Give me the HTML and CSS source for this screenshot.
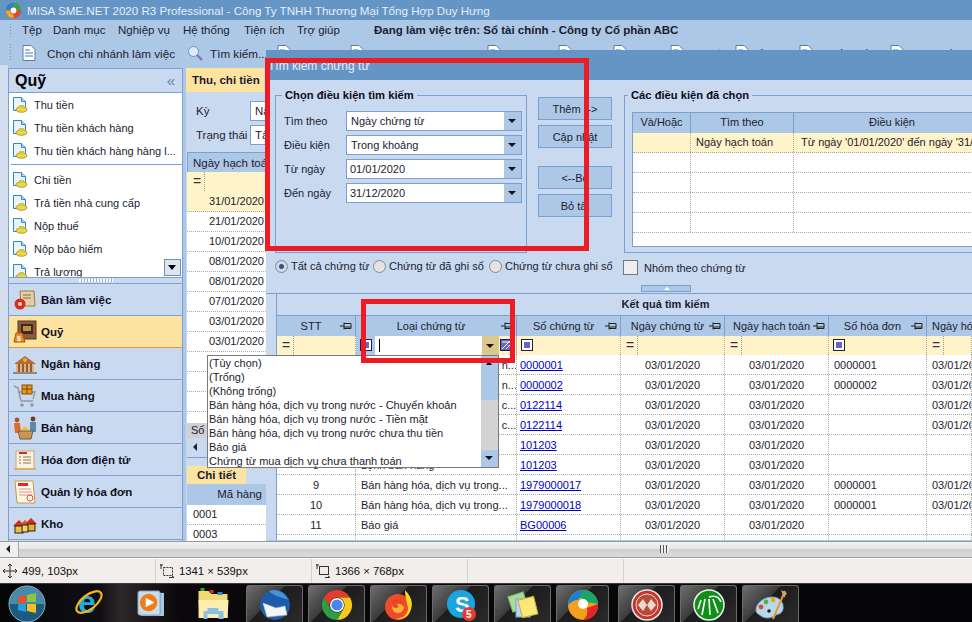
FILE: index.html
```html
<!DOCTYPE html>
<html lang="vi">
<head>
<meta charset="utf-8">
<title>MISA SME.NET 2020</title>
<link rel="stylesheet" href="styles.css">
</head>
<body>
<svg class="defs" width="0" height="0">
  <defs>
    <symbol id="doc" viewBox="0 0 16 16"><path d="M1.500 .5h8l4 4v9h-12z" fill="#eaf3fc" stroke="#2f86d0"/><path d="M9.500 .5v4h4" fill="#bcd9f2" stroke="#2f86d0"/><ellipse cx="9.500" cy="12.500" rx="5.500" ry="2.800" fill="#e8d84a" stroke="#8c7a10" stroke-width=".7"/><rect x="7" y="8" width="5" height="2.500" fill="#d8c53a"/></symbol>
    <symbol id="pin" viewBox="0 0 12 10"><path d="M0 5h4M4 1.500v7M4 2.500h7v5H4M4 6h7" fill="none" stroke="#222" stroke-width="1"/></symbol>
    <symbol id="fsq" viewBox="0 0 12 12"><rect x=".5" y=".5" width="11" height="11" fill="#fff" stroke="#223"/><rect x="3" y="3" width="6" height="6" fill="#6464cc"/></symbol>
    <symbol id="page" viewBox="0 0 14 16"><path d="M1 .5h8l4 4v11H1z" fill="#fff" stroke="#5a7ea8"/><path d="M3 5h5M3 8h8M3 11h8" stroke="#3a78c0"/></symbol>
  </defs>
</svg>

<div class="menubar-wrap">
  <header class="titlebar">
    <svg class="app-logo" viewBox="0 0 20 20"><circle cx="10" cy="10" r="9" fill="#e8442e"/><path d="M10 1a9 9 0 0 1 9 9h-5a4 4 0 0 0-4-4z" fill="#2fa84f"/><path d="M1 10a9 9 0 0 1 9-9v5a4 4 0 0 0-4 4z" fill="#1e88d8"/><path d="M1 10a9 9 0 0 0 9 9v-4a5 5 0 0 1-4-5z" fill="#f4a81c"/><circle cx="10" cy="10" r="3.400" fill="#fff"/></svg>
    <span class="title-text">MISA SME.NET 2020 R3 Professional - Công Ty TNHH Thương Mại Tổng Hợp Duy Hưng</span>
  </header>
  <nav class="menubar">
    <i class="grip"></i>
    <span class="m1">Tệp</span><span class="m2">Danh mục</span><span class="m3">Nghiệp vụ</span><span class="m4">Hệ thống</span><span class="m5">Tiện ích</span><span class="m6">Trợ giúp</span>
    <b class="working">Đang làm việc trên: Sổ tài chính - Công ty Cổ phần ABC</b>
  </nav>
  <div class="toolbar">
    <i class="grip"></i>
    <svg class="tb-ico t1"><use href="#page"/></svg><span class="t-chon">Chọn chi nhánh làm việc</span>
    <svg class="tb-ico t2" viewBox="0 0 16 16"><circle cx="6.500" cy="6.500" r="5" fill="#dcecfa" stroke="#6d93bd"/><path d="M10 10l5 5" stroke="#8a6fc0" stroke-width="2.400"/></svg><span class="t-tim">Tìm kiếm...</span>
    <svg class="tb-ico t3"><use href="#page"/></svg><span class="t-bc">Báo cáo</span>
    <svg class="tb-ico t4"><use href="#page"/></svg><span class="t-nk">Nhật ký chứng từ</span>
    <svg class="tb-ico t5"><use href="#page"/></svg><span class="t-them">Thêm</span>
    <svg class="tb-ico t6"><use href="#page"/></svg><span class="t-xem">Xem</span>
    <svg class="tb-ico t7"><use href="#page"/></svg><span class="t-xoa">Xóa</span>
    <svg class="tb-ico t8"><use href="#page"/></svg><span class="t-ghi dim">Ghi sổ</span>
    <svg class="tb-ico t9"><use href="#page"/></svg><span class="t-bo">Bỏ ghi</span>
    <svg class="tb-ico t10"><use href="#page"/></svg><span class="t-xk">Xuất khẩu</span>
    <svg class="tb-ico t11"><use href="#page"/></svg><span class="t-ph">Phản hồi</span>
  </div>
</div>

<main class="work">
  <aside class="sidebar">
    <div class="side-head"><strong>Quỹ</strong><span class="collapse">«</span></div>
    <div class="side-list">
      <div class="side-item"><svg class="doc"><use href="#doc"/></svg>Thu tiền</div>
      <div class="side-item"><svg class="doc"><use href="#doc"/></svg>Thu tiền khách hàng</div>
      <div class="side-item"><svg class="doc"><use href="#doc"/></svg>Thu tiền khách hàng hàng l...</div>
      <div class="side-sep"></div>
      <div class="side-item"><svg class="doc"><use href="#doc"/></svg>Chi tiền</div>
      <div class="side-item"><svg class="doc"><use href="#doc"/></svg>Trả tiền nhà cung cấp</div>
      <div class="side-item"><svg class="doc"><use href="#doc"/></svg>Nộp thuế</div>
      <div class="side-item"><svg class="doc"><use href="#doc"/></svg>Nộp bảo hiểm</div>
      <div class="side-item"><svg class="doc"><use href="#doc"/></svg>Trả lương</div>
      <span class="side-scroll"></span>
    </div>
    <div class="side-split"></div>
    <div class="nav-item">
      <svg class="nav-ico" viewBox="0 0 24 24"><path d="M7 3h14l1 15H8z" fill="#e2cfa6" stroke="#9a7a48"/><path d="M10 7h8M10 10h8" stroke="#8a6a3a"/><circle cx="7" cy="16" r="5.500" fill="#e0281e"/><circle cx="7" cy="16" r="2" fill="#fff2c0"/></svg>
      Bàn làm việc</div>
    <div class="nav-item active">
      <svg class="nav-ico" viewBox="0 0 24 24"><rect x="5" y="1" width="18" height="18" fill="#8e5a3a" stroke="#5c3820"/><rect x="8" y="4" width="12" height="10" fill="#3a2a20"/><path d="M10 6h8v5h-8z" fill="#c09040"/><path d="M1 22l2-9h6l3 9z" fill="#f08a1e" stroke="#a85808"/><text class="dollar" x="4" y="21">$</text></svg>
      Quỹ</div>
    <div class="nav-item">
      <svg class="nav-ico" viewBox="0 0 24 24"><path d="M1 12L12 4l11 8z" fill="#b86a3c"/><rect x="3" y="12" width="18" height="8" fill="#e0b080"/><path d="M6 12v8M10 12v8M14 12v8M18 12v8" stroke="#7a4a28" stroke-width="1.600"/><path d="M0 21h24" stroke="#8a8a8a" stroke-width="2"/><circle cx="12" cy="8" r="2" fill="#e8b81c"/></svg>
      Ngân hàng</div>
    <div class="nav-item">
      <svg class="nav-ico" viewBox="0 0 24 24"><path d="M1 2l4 2 3 13h12M5 8h17l-2 7" fill="none" stroke="#8a98a8" stroke-width="1.400"/><rect x="9" y="1" width="10" height="9" fill="#e8981c" stroke="#8a5208"/><path d="M14 1v9M9 5h10" stroke="#7a4208"/><circle cx="9" cy="21" r="1.800" fill="#8a98a8"/><circle cx="19" cy="21" r="1.800" fill="#8a98a8"/></svg>
      Mua hàng</div>
    <div class="nav-item">
      <svg class="nav-ico" viewBox="0 0 24 24"><circle cx="4" cy="4" r="2.400" fill="#a05a30"/><path d="M1 7h6l1 10H2z" fill="#e06a2a"/><circle cx="20" cy="3" r="2.400" fill="#6a4020"/><path d="M17 6h6v10h-6z" fill="#5a8ab0"/><path d="M5 15h15l-2 8H7z" fill="#c8965a" stroke="#7a5a28"/><path d="M8 14l4-4 4 4z" fill="#f0c020"/></svg>
      Bán hàng</div>
    <div class="nav-item">
      <svg class="nav-ico" viewBox="0 0 24 24"><rect x="3" y="3" width="18" height="18" fill="#fbf2dc" stroke="#c8a878"/><rect x="6" y="4" width="8" height="2" fill="#c83020"/><path d="M10 9h8M10 12h8M10 15h8M6 9h2M6 12h2M6 15h2" stroke="#8a7a5a"/><path d="M1 21h22" stroke="#d8b070" stroke-width="2"/></svg>
      Hóa đơn điện tử</div>
    <div class="nav-item">
      <svg class="nav-ico" viewBox="0 0 24 24"><path d="M2 1h18l2 22H4z" fill="#fdf6e4" stroke="#c89848"/><rect x="5" y="3" width="10" height="3" fill="#d83020"/><path d="M6 9h12M6 12h13M6 15h13" stroke="#d89898"/><circle cx="17" cy="18" r="3" fill="none" stroke="#d85050"/></svg>
      Quản lý hóa đơn</div>
    <div class="nav-item">
      <svg class="nav-ico" viewBox="0 0 24 24"><path d="M0 14l6-6 6 6z" fill="#d82a1c"/><path d="M12 12l6-6 6 6z" fill="#d82a1c"/><path d="M7 13l5-5 5 5z" fill="#e84a2c"/><rect x="2" y="14" width="8" height="7" fill="#f0c040" stroke="#222"/><rect x="14" y="12" width="8" height="7" fill="#e8b030" stroke="#222"/><rect x="9" y="13" width="6" height="7" fill="#f4d060" stroke="#222"/></svg>
      Kho</div>
  </aside>

  <section class="center">
    <div class="tab-row"><span class="tab-on">Thu, chi tiền</span></div>
    <div class="filter-line"><label>Kỳ</label><span class="mini-input">Năm</span></div>
    <div class="filter-line second"><label>Trạng thái</label><span class="mini-input">Tất</span></div>
    <div class="mini-grid">
      <div class="mini-head">Ngày hạch toán</div>
      <div class="mini-filter"><span>=</span></div>
      <div class="mini-row sel">31/01/2020</div>
      <div class="mini-row">21/01/2020</div>
      <div class="mini-row">10/01/2020</div>
      <div class="mini-row">08/01/2020</div>
      <div class="mini-row">08/01/2020</div>
      <div class="mini-row">07/01/2020</div>
      <div class="mini-row">03/01/2020</div>
      <div class="mini-row">03/01/2020</div>
      <div class="mini-row"></div>
      <div class="mini-row"></div>
      <div class="mini-row"></div>
      <div class="mini-blank"></div>
      <div class="mini-foot">Số</div>
      <div class="mini-scroll"><i class="arr-left"></i></div>
    </div>
    <div class="detail">
      <div class="detail-tabs"><span class="detail-tab">Chi tiết</span></div>
      <div class="detail-head">Mã hàng</div>
      <div class="detail-row">0001</div>
      <div class="detail-row">0003</div>
    </div>
  </section>
</main>

<div class="hscroll"><span class="hs-btn"><i class="arr-left"></i></span><span class="hs-thumb"><i class="hs-grip"></i></span></div>

<footer class="status">
  <div class="st-cell">
    <svg class="st-ico" viewBox="0 0 14 14"><path d="M7 0v14M0 7h14M5 2l2-2 2 2M5 12l2 2 2-2M2 5L0 7l2 2M12 5l2 2-2 2" fill="none" stroke="#333"/></svg>
    499, 103px</div>
  <div class="st-cell">
    <svg class="st-ico" viewBox="0 0 14 14"><rect x="3.500" y="3.500" width="9" height="8" fill="none" stroke="#333" stroke-dasharray="2 1"/><path d="M1 0v5M3 1H0M9 13.500h5M12 12l2 1.500-2 .5" fill="none" stroke="#333"/></svg>
    1341 × 539px</div>
  <div class="st-cell">
    <svg class="st-ico" viewBox="0 0 14 14"><rect x="3.500" y="2.500" width="9" height="8" fill="none" stroke="#333"/><path d="M1 0v5M3 1H0M9 13.500h5M12 12l2 1.500-2 .5" fill="none" stroke="#333"/></svg>
    1366 × 768px</div>
  <div class="st-cell"></div>
</footer>

<div class="taskbar">
  <svg class="tk-plain orb" viewBox="0 0 38 38"><circle cx="19" cy="19" r="18" fill="#1c5a80" stroke="#8fb6cc"/><path d="M1 19a18 18 0 0 1 36 0z" fill="#5d9cbc" opacity=".7"/><path d="M10 12l8-2v8h-8z" fill="#e8502a"/><path d="M19 10l9-2v9h-9z" fill="#8cc640"/><path d="M10 19h8v8l-8-2z" fill="#2a9ce0"/><path d="M19 19h9v9l-9-2z" fill="#f4c020"/></svg>
  <svg class="tk-plain ie" viewBox="0 0 30 34"><text class="ie-e" x="4" y="27">e</text><ellipse cx="15" cy="16" rx="15" ry="7" fill="none" stroke="#f0b814" stroke-width="2.200" transform="rotate(-38 15 16)"/></svg>
  <svg class="tk-plain wmp" viewBox="0 0 28 28"><rect x="4" y="3" width="24" height="24" fill="#a8c8e0"/><rect x="1" y="1" width="23" height="25" rx="2" fill="#c8dcec" stroke="#7a9cb8"/><circle cx="12" cy="13" r="9" fill="#f07c18"/><path d="M9 8l9 5-9 5z" fill="#fff"/></svg>
  <svg class="tk-plain folder" viewBox="0 0 32 34"><path d="M1 4h10l3 3h16v24H1z" fill="#f4d878"/><rect x="3" y="1" width="4" height="3" fill="#2aa82a"/><rect x="12" y="3" width="4" height="3" fill="#d83020"/><rect x="20" y="5" width="5" height="3" fill="#2a88d8"/><path d="M1 13h30l-1 18H2z" fill="#fbeeb0"/><path d="M6 32v-8h4v-3h11v3h5v8h-5v-5H10v5z" fill="#8cc0e0"/></svg>
  <div class="tk-btn b1"><svg class="tk-ico" viewBox="0 0 32 32"><circle cx="16" cy="16" r="15" fill="#1c5ca8"/><path d="M4 14l13 5 9-2 2 9-20 2z" fill="#f4f4f4" stroke="#b8c0c8" stroke-width=".6"/><path d="M10 2c8-3 16 2 19 9-6-3-13-3-19-9z" fill="#4a90d8"/></svg></div>
  <div class="tk-btn b2"><svg class="tk-ico" viewBox="0 0 32 32"><path d="M3 8.500A15 15 0 0 1 29 8.500H16a7.500 7.500 0 0 0-6.500 11.250z" fill="#e53a2e"/><path d="M29 8.500A15 15 0 0 1 16 31l6.500-11.250A7.500 7.500 0 0 0 16 8.500z" fill="#f8c81c"/><path d="M16 31A15 15 0 0 1 3 8.500l6.500 11.250a7.500 7.500 0 0 0 13 0z" fill="#2e9e44"/><circle cx="16" cy="16" r="7" fill="#fff"/><circle cx="16" cy="16" r="5.600" fill="#4a86e8"/></svg></div>
  <div class="tk-btn b3"><svg class="tk-ico" viewBox="0 0 32 32"><circle cx="15" cy="18" r="13" fill="#ee4b2b"/><path d="M22 1c8 8 9 17 3 25-3 3-7 5-12 4 10-1 14-8 11-15-1-5-2-9-2-14z" fill="#fdd420"/><circle cx="15" cy="18" r="6" fill="#ffb03a"/><path d="M9 11c6-3 12 0 12 7-2-3-5-4-8-3 3 1 3 4 0 4-4 0-5-5-4-8z" fill="#e8461e"/></svg></div>
  <div class="tk-btn b4"><svg class="tk-ico" viewBox="0 0 32 32"><circle cx="16" cy="15" r="14" fill="#19a5e0"/><text class="skype" x="10" y="23">S</text><circle cx="24" cy="25" r="7" fill="#e8392e"/><text class="badge-5" x="21" y="29">5</text></svg></div>
  <div class="tk-btn b5"><svg class="tk-ico" viewBox="0 0 32 32"><rect x="3" y="5" width="16" height="16" fill="#a8dc98" stroke="#7ab868" transform="rotate(-18 11 13)"/><rect x="9" y="10" width="14" height="18" fill="#b4d8f4" stroke="#78a8d0"/><rect x="13" y="9" width="16" height="18" fill="#fce878" stroke="#c8b040" transform="rotate(-14 21 18)"/></svg></div>
  <div class="tk-btn b6"><svg class="tk-ico" viewBox="0 0 32 32"><circle cx="16" cy="16" r="15" fill="#f4a01c"/><path d="M16 1a15 15 0 0 1 15 14l-12-2c-2-4-6-5-10-3 1-5 3-8 7-9z" fill="#16a868"/><path d="M16 1a15 15 0 0 0-15 15c3-3 6-5 10-5 2-4 4-8 5-10z" fill="#1c80d8"/><path d="M31 15a15 15 0 0 1-15 16c4-3 5-7 4-12z" fill="#e4262c"/><circle cx="16" cy="15" r="5" fill="#fff"/></svg></div>
  <div class="tk-btn b7"><svg class="tk-ico" viewBox="0 0 32 32"><circle cx="16" cy="16" r="15" fill="#c8322a" stroke="#e8e8e8" stroke-width="1.500"/><circle cx="16" cy="16" r="11" fill="#b84a3c" stroke="#f0d8d0"/><path d="M7 16l5-6 4 6-4 6zM16 16l4-6 5 6-5 6z" fill="#f0d8d0"/></svg></div>
  <div class="tk-btn b8"><svg class="tk-ico" viewBox="0 0 32 32"><circle cx="16" cy="16" r="15" fill="#109018" stroke="#e8f8e8" stroke-width="1.500"/><path d="M16 8c6-2 10 0 12 5M12 10l-3 16M16 10l1 16M20 10l5 14M8 11l-3 9" fill="none" stroke="#fff" stroke-width="1.600"/></svg></div>
  <div class="tk-btn b9"><svg class="tk-ico" viewBox="0 0 32 32"><path d="M1 21c0-7 8-13 16-13s12 6 11 12-7 5-9 7-9 3-13 0-5-3-5-6z" fill="#b8d8ec" stroke="#7aa0bc"/><circle cx="6" cy="18" r="2.400" fill="#d84a3a"/><circle cx="11" cy="13" r="2.400" fill="#5ab04a"/><circle cx="18" cy="11" r="2.400" fill="#e8a81c"/><circle cx="14" cy="22" r="1.800" fill="#222"/><path d="M30 2l-12 28" stroke="#e89838" stroke-width="2"/><path d="M26 1l6 3-3 5z" fill="#c8a878"/></svg></div>
</div>

<section class="dialog">
  <div class="dlg-title">Tìm kiếm chứng từ</div>
  <div class="dlg-top">
    <fieldset class="group g-left">
      <legend>Chọn điều kiện tìm kiếm</legend>
      <div class="cond"><label>Tìm theo</label><span class="combo"><span class="combo-text">Ngày chứng từ</span><i class="combo-btn"></i></span></div>
      <div class="cond"><label>Điều kiện</label><span class="combo"><span class="combo-text">Trong khoảng</span><i class="combo-btn"></i></span></div>
      <div class="cond"><label>Từ ngày</label><span class="combo"><span class="combo-text tight">01/01/2020</span><i class="combo-btn"></i></span></div>
      <div class="cond"><label>Đến ngày</label><span class="combo"><span class="combo-text tight">31/12/2020</span><i class="combo-btn"></i></span></div>
    </fieldset>
    <div class="btns">
      <button class="btn">Thêm --&gt;</button>
      <button class="btn">Cập nhật</button>
      <button class="btn spaced">&lt;--Bỏ</button>
      <button class="btn">Bỏ tất</button>
    </div>
    <fieldset class="group g-right">
      <legend>Các điều kiện đã chọn</legend>
      <div class="cgrid">
        <div class="c-row c-head"><span>Và/Hoặc</span><span>Tìm theo</span><span>Điều kiện</span></div>
        <div class="c-row c-sel"><span></span><span class="left">Ngày hạch toán</span><span class="left pad">Từ ngày '01/01/2020' đến ngày '31/12/2020'</span></div>
        <div class="c-row"><span></span><span></span><span></span></div>
        <div class="c-row"><span></span><span></span><span></span></div>
        <div class="c-row"><span></span><span></span><span></span></div>
        <div class="c-row"><span></span><span></span><span></span></div>
      </div>
    </fieldset>
  </div>
  <div class="dlg-opts">
    <label class="radio on r1">Tất cả chứng từ</label>
    <label class="radio r2">Chứng từ đã ghi sổ</label>
    <label class="radio">Chứng từ chưa ghi sổ</label>
    <label class="check">Nhóm theo chứng từ</label>
  </div>
  <div class="dlg-collapse"><span class="collapse-btn"></span></div>
  <div class="results">
    <div class="res-title">Kết quả tìm kiếm</div>
    <div class="r-row r-head">
      <span>STT<svg class="pin"><use href="#pin"/></svg></span>
      <span>Loại chứng từ<svg class="pin"><use href="#pin"/></svg></span>
      <span>Số chứng từ<svg class="pin"><use href="#pin"/></svg></span>
      <span>Ngày chứng từ<svg class="pin"><use href="#pin"/></svg></span>
      <span>Ngày hạch toán<svg class="pin"><use href="#pin"/></svg></span>
      <span>Số hóa đơn<svg class="pin"><use href="#pin"/></svg></span>
      <span class="clip">Ngày hóa đơn</span>
    </div>
    <div class="r-row r-filter">
      <span><em class="eq">=</em></span>
      <span class="edit-cell"><svg class="fsq"><use href="#fsq"/></svg><span class="edit-box"><i class="caret"></i></span><i class="edit-arrow"></i><svg class="fsq2" viewBox="0 0 12 12"><rect x=".5" y=".5" width="11" height="11" fill="#6464cc" stroke="#223"/><path d="M2 10L10 2M6 10l4-4M2 3h8" stroke="#fff"/></svg></span>
      <span><svg class="fsq"><use href="#fsq"/></svg></span>
      <span><em class="eq">=</em></span>
      <span><em class="eq">=</em></span>
      <span><svg class="fsq"><use href="#fsq"/></svg></span>
      <span><em class="eq">=</em></span>
    </div>
    <div class="r-row"><span class="ctr">1</span><span>Bán hàng hóa, dịch vụ trong n...</span><span><a>0000001</a></span><span class="ctr">03/01/2020</span><span class="ctr">03/01/2020</span><span>0000001</span><span class="ctr-l">03/01/2020</span></div>
    <div class="r-row"><span class="ctr">2</span><span>Bán hàng hóa, dịch vụ trong n...</span><span><a>0000002</a></span><span class="ctr">03/01/2020</span><span class="ctr">03/01/2020</span><span>0000002</span><span class="ctr-l">03/01/2020</span></div>
    <div class="r-row"><span class="ctr">3</span><span>Bán hàng hóa, dịch vụ trong c...</span><span><a>0122114</a></span><span class="ctr">03/01/2020</span><span class="ctr">03/01/2020</span><span></span><span class="ctr-l">03/01/2020</span></div>
    <div class="r-row"><span class="ctr">4</span><span>Bán hàng hóa, dịch vụ trong c...</span><span><a>0122114</a></span><span class="ctr">03/01/2020</span><span class="ctr">03/01/2020</span><span></span><span class="ctr-l">03/01/2020</span></div>
    <div class="r-row"><span class="ctr">7</span><span>Báo giá</span><span><a>101203</a></span><span class="ctr">03/01/2020</span><span class="ctr">03/01/2020</span><span></span><span></span></div>
    <div class="r-row"><span class="ctr">8</span><span>Lệnh bán hàng</span><span><a>101203</a></span><span class="ctr">03/01/2020</span><span class="ctr">03/01/2020</span><span></span><span></span></div>
    <div class="r-row"><span class="ctr">9</span><span>Bán hàng hóa, dịch vụ trong...</span><span><a>1979000017</a></span><span class="ctr">03/01/2020</span><span class="ctr">03/01/2020</span><span>0000001</span><span class="ctr-l">03/01/2020</span></div>
    <div class="r-row"><span class="ctr">10</span><span>Bán hàng hóa, dịch vụ trong...</span><span><a>1979000018</a></span><span class="ctr">03/01/2020</span><span class="ctr">03/01/2020</span><span>0000001</span><span class="ctr-l">03/01/2020</span></div>
    <div class="r-row"><span class="ctr">11</span><span>Báo giá</span><span><a>BG00006</a></span><span class="ctr">03/01/2020</span><span class="ctr">03/01/2020</span><span></span><span></span></div>
    <div class="r-row"><span></span><span></span><span></span><span></span><span></span><span></span><span></span></div>
  </div>
</section>

<div class="dropdown">
  <ul class="dd-list">
    <li>(Tùy chọn)</li>
    <li>(Trống)</li>
    <li>(Không trống)</li>
    <li>Bán hàng hóa, dịch vụ trong nước - Chuyển khoản</li>
    <li>Bán hàng hóa, dịch vụ trong nước - Tiền mặt</li>
    <li>Bán hàng hóa, dịch vụ trong nước chưa thu tiền</li>
    <li>Báo giá</li>
    <li>Chứng từ mua dịch vụ chưa thanh toán</li>
  </ul>
  <div class="dd-scroll"><span class="dd-up"></span><span class="dd-thumb"></span><span class="dd-track"></span><span class="dd-down"></span></div>
</div>

<div class="mark mark-a"></div>
<div class="mark mark-b"></div>
</body>
</html>
```

FILE: styles.css
```css
* { box-sizing: border-box; }
html, body { margin: 0; padding: 0; }
body {
  width: 972px; height: 622px; overflow: hidden; position: relative;
  display: flex; flex-direction: column;
  font: 11px "Liberation Sans", Arial, sans-serif;
  color: #1c1c30; background: #c9daf0;
}
.defs { position: absolute; }
i, em { font-style: normal; }

.menubar-wrap { flex: none; }
.titlebar { height: 20px; background: #6495c5; color: #e8eef6; display: flex; align-items: center; padding-left: 5px; gap: 5px; font-size: 11.600px; white-space: nowrap; }
.app-logo { width: 17px; height: 17px; flex: none; }
.menubar { height: 20px; background: #adc7e6; position: relative; white-space: nowrap; font-size: 11.500px; }
.menubar span, .menubar b { position: absolute; top: 4px; }
.grip { position: absolute; left: 9px; top: 3px; bottom: 3px; width: 4px; background-image: radial-gradient(#7d8fa6 1px, transparent 1px); background-size: 3px 3px; }
.m1 { left: 22px; } .m2 { left: 53px; } .m3 { left: 118px; } .m4 { left: 183px; } .m5 { left: 244px; } .m6 { left: 297px; }
.working { left: 374px; font-weight: 700; }
.toolbar { height: 25px; background: #adc7e6; position: relative; white-space: nowrap; font-size: 11.700px; }
.toolbar span { position: absolute; top: 7px; }
.tb-ico { position: absolute; top: 5px; width: 14px; height: 16px; }
.t1 { left: 22px; } .t2 { left: 187px; width: 16px; } .t3 { left: 277px; } .t4 { left: 350px; } .t5 { left: 487px; } .t6 { left: 558px; } .t7 { left: 613px; } .t8 { left: 670px; } .t9 { left: 735px; } .t10 { left: 799px; } .t11 { left: 890px; }
.t-chon { left: 47px; } .t-tim { left: 210px; } .t-bc { left: 298px; } .t-nk { left: 373px; } .t-them { left: 511px; } .t-xem { left: 580px; } .t-xoa { left: 636px; } .t-ghi { left: 687px; } .t-bo { left: 751px; } .t-xk { left: 822px; } .t-ph { left: 913px; }
.dim { color: #7a8798; }

.work { flex: none; height: 476px; display: flex; background: #adc7e6; padding-top: 3px; padding-left: 8px; overflow: hidden; box-shadow: inset 8px 0 0 #d3dfef; }
.sidebar { width: 175px; flex: none; border: 1px solid #7ba0cf; border-bottom: 0; background: #c9daf0; margin-right: 3px; display: flex; flex-direction: column; }
.side-head { height: 24px; flex: none; display: flex; align-items: center; justify-content: space-between; padding: 0 7px 0 6px; border-bottom: 1px solid #7ba0cf; }
.side-head strong { font: 700 16px "Liberation Sans", sans-serif; color: #000; }
.collapse { color: #5b82b2; font-size: 15px; line-height: 1; }
.side-list { height: 184px; flex: none; background: #fff; overflow: hidden; position: relative; }
.side-item { height: 23px; display: flex; align-items: center; gap: 6px; padding-left: 3px; white-space: nowrap; }
.doc { width: 16px; height: 16px; flex: none; }
.side-sep { border-top: 1px solid #7ba0cf; margin: 2px 0 3px 2px; height: 0; }
.side-scroll { position: absolute; right: 1px; bottom: 1px; width: 17px; height: 17px; background: #dbe6f4; border: 1px solid #7a8da6; }
.side-scroll::after { content: ""; position: absolute; left: 3px; top: 5px; border: 4px solid transparent; border-top: 5px solid #000; }
.side-split { height: 7px; flex: none; border-top: 1px solid #7ba0cf; border-bottom: 1px solid #7ba0cf; background: #c9daf0; position: relative; }
.side-split::after { content: ""; position: absolute; left: 70px; top: 1px; width: 34px; height: 3px; background: repeating-linear-gradient(90deg, #fff 0 2px, #8fa8c8 2px 3px); }
.nav-item { height: 32px; flex: none; display: flex; align-items: center; gap: 4px; padding: 1px 0 0 4px; font: 700 11.500px "Liberation Sans", sans-serif; border-bottom: 1px solid #7ba0cf; color: #10101c; background: #c9daf0; }
.nav-item.active { background: #fde3a0; border-bottom-color: #f09040; }
.nav-ico { width: 24px; height: 24px; flex: none; }
.dollar { font: 700 7px "Liberation Sans", sans-serif; fill: #fff; }

.center { width: 80px; flex: none; background: #c9daf0; display: flex; flex-direction: column; overflow: hidden; white-space: nowrap; }
.tab-row { height: 24px; flex: none; }
.tab-on { display: block; width: 78px; height: 24px; background: #fde3a0; font: 700 11.500px/24px "Liberation Sans", sans-serif; padding-left: 6px; overflow: hidden; }
.filter-line { display: flex; flex: none; align-items: center; height: 22px; margin-top: 8px; padding-left: 10px; font-size: 11.500px; }
.filter-line.second { margin-top: 2px; }
.filter-line label { width: 54px; flex: none; }
.mini-input { width: 40px; flex: none; height: 20px; background: #fff; border: 1px solid #7ba0cf; padding-left: 4px; line-height: 18px; }
.mini-grid { margin: 6px 0 0 1px; flex: none; }
.mini-head { height: 20px; background: #adc7e6; padding-left: 5px; line-height: 20px; border-top: 1px solid #7ba0cf; border-left: 1px solid #7ba0cf; font-size: 11.500px; }
.mini-filter { height: 20px; background: #fff3ca; padding-left: 6px; line-height: 19px; font-size: 14px; color: #334; }
.mini-filter span { display: inline-block; width: 12px; border-right: 1px dotted #999; }
.mini-row { height: 20px; background: #fff; border-bottom: 1px dotted #aaa; text-align: right; padding-right: 2px; line-height: 19px; }
.mini-row.sel { background: #fff3ca; }
.mini-blank { height: 11px; background: #fff; }
.mini-foot { height: 15px; background: #d0d0d0; padding-left: 4px; line-height: 15px; }
.mini-scroll { height: 20px; background: #c9daf0; border-bottom: 1px solid #7ba0cf; position: relative; }
.arr-left { position: absolute; left: 6px; top: 5px; border: 4px solid transparent; border-right: 4px solid #222; border-left: 0; }
.detail { margin: 8px 0 0 1px; flex: none; }
.detail-tabs { height: 18px; background: #c9daf0; }
.detail-tab { display: block; width: 59px; height: 18px; background: #fde3a0; font: 700 11.500px/18px "Liberation Sans", sans-serif; text-align: center; }
.detail-head { height: 21px; background: #adc7e6; text-align: right; padding-right: 4px; line-height: 20px; font-size: 11.500px; }
.detail-row { height: 20px; background: #fff; border-bottom: 1px dotted #aaa; padding-left: 6px; line-height: 19px; }

.hscroll { flex: none; height: 17px; display: flex; background: #f0f0f0; border-top: 1px solid #9a9a9a; border-bottom: 1px solid #9a9a9a; }
.hs-btn { width: 18px; position: relative; flex: none; }
.hs-btn .arr-left { left: 6px; top: 3px; }
.hs-thumb { flex: 1; background: linear-gradient(#f2f2f2, #e6e6e6 45%, #cfcfcf 50%, #dcdcdc); border-left: 1px solid #a8a8a8; position: relative; }
.hs-grip { position: absolute; left: 641px; top: 3px; width: 9px; height: 8px; background: repeating-linear-gradient(90deg, #555 0 1px, #eee 1px 3px); }

.status { flex: none; height: 25px; background: #f0edeb; display: flex; border-top: 1px solid #fff; font-size: 11.300px; }
.st-cell { width: 156px; flex: none; border-right: 1px solid #d4d2d0; display: flex; align-items: center; gap: 5px; padding-left: 3px; white-space: nowrap; color: #111; }
.st-cell + .st-cell { padding-left: 4px; }
.st-ico { width: 14px; height: 14px; flex: none; }

.taskbar { flex: none; height: 39px; background: linear-gradient(90deg, #050507 0, #100e12 100px, #2c2628 120px, #0a080a 180px, #050507 100%); border-top: 1px solid #3a3a3a; position: relative; }
.tk-plain { position: absolute; }
.orb { left: 8px; top: 1px; width: 38px; height: 38px; }
.ie { left: 74px; top: 2px; width: 30px; height: 34px; }
.ie-e { font: 700 32px "Liberation Sans", sans-serif; fill: #26a8e0; }
.wmp { left: 137px; top: 6px; width: 27px; height: 27px; }
.folder { left: 197px; top: 3px; width: 33px; height: 34px; }
.tk-btn { position: absolute; top: 1px; height: 38px; width: 57px; display: flex; align-items: center; justify-content: center; border: 1px solid #6a6a6a; border-bottom: 0; border-radius: 3px 3px 0 0; background: linear-gradient(135deg, #6e6e6e 0, #3c3c3c 40%, #1c1c1c 42%, #2a2a2a 100%); }
.tk-ico { width: 32px; height: 32px; }
.b1 { left: 246px; } .b2 { left: 308px; } .b3 { left: 370px; } .b4 { left: 432px; } .b5 { left: 494px; } .b6 { left: 556px; width: 53px; } .b7 { left: 618px; } .b8 { left: 680px; } .b9 { left: 742px; }
.skype { font: 700 22px "Liberation Sans", sans-serif; fill: #fff; }
.badge-5 { font: 700 10px "Liberation Sans", sans-serif; fill: #fff; }

.dialog { position: absolute; left: 266px; top: 50px; width: 706px; height: 490px; background: #c9daf0; overflow: hidden; white-space: nowrap; font-size: 11px; }
.dlg-title { height: 30px; background: #6495c5; color: #e8eef6; font-size: 12px; padding: 9px 0 0 2px; }
.dlg-top { display: flex; height: 173px; padding: 8px 0 0 9px; }
.group { margin: 0; padding: 0; border: 1px solid #7ba0cf; min-width: 0; flex: none; height: 165px; }
.group legend { font-weight: 700; padding: 0 3px; color: #0c0c18; font-size: 11.200px; line-height: 15px; }
.g-left { width: 252px; padding: 8px 5px 0 8px; }
.g-left legend { margin-left: -2px; }
.cond { display: flex; align-items: center; height: 20px; margin-bottom: 4px; }
.cond label { width: 62px; flex: none; }
.combo { width: 176px; height: 20px; flex: none; border: 1px solid #7ba0cf; background: #fff; display: flex; }
.combo-text { flex: 1; padding-left: 4px; line-height: 18px; }
.combo-text.tight { padding-left: 3px; }
.combo-btn { width: 17px; flex: none; background: #adc7e6; position: relative; }
.combo-btn::after { content: ""; position: absolute; left: 4px; top: 7px; border: 4px solid transparent; border-top: 4px solid #111; border-bottom: 0; }
.btns { width: 74px; flex: none; margin: 9px 12px 0 11px; display: flex; flex-direction: column; gap: 5px; }
.btn { height: 23px; padding: 0; background: #adc7e6; border: 1px solid #7ba0cf; font: inherit; color: inherit; flex: none; }
.btn.spaced { margin-top: 13px; }
.g-right { width: 360px; padding: 9px 0 0 7px; }
.g-right legend { margin-left: -4px; }
.cgrid { border: 1px solid #7ba0cf; width: 360px; height: 135px; background: #fff; }
.c-row { display: grid; grid-template-columns: 58px 103px 1fr; height: 20px; border-bottom: 1px dotted #aaa; }
.c-row span { border-right: 1px dotted #aaa; text-align: center; line-height: 19px; overflow: hidden; }
.c-head { background: #adc7e6; border-bottom: 0; }
.c-head span { border-right: 1px solid #7ba0cf; }
.c-sel { background: #fff3ca; }
.c-row .left { text-align: left; padding-left: 5px; }
.c-row .pad { padding-left: 7px; }

.dlg-opts { height: 26px; display: flex; position: relative; align-items: center; padding-left: 9px; }
.radio { display: flex; align-items: center; gap: 3px; flex: none; }
.r1 { width: 98px; }
.r2 { width: 116px; }
.radio::before { content: ""; width: 11px; height: 11px; border-radius: 50%; background: #e4e4e4; border: 1px solid #888; flex: none; }
.radio.on::before { background: radial-gradient(#2f4f8f 0 2px, #cfd8e6 3px); }
.check { position: absolute; left: 357px; top: 7px; display: flex; align-items: center; gap: 6px; }
.check::before { content: ""; width: 13px; height: 13px; background: #eee; border: 1px solid #777; flex: none; }
.dlg-collapse { height: 15px; padding: 6px 0 0 375px; border-bottom: 1px solid #7ba0cf; }
.collapse-btn { display: block; width: 50px; height: 7px; background: #adc7e6; border: 1px solid #7ba0cf; position: relative; }
.collapse-btn::after { content: ""; position: absolute; left: 22px; top: 1px; border: 3px solid transparent; border-bottom: 3px solid #fff; border-top: 0; }
.results { margin-left: 10px; border-left: 1px solid #7ba0cf; }
.res-title { height: 22px; font-weight: 700; text-align: center; padding-left: 82px; line-height: 21px; border-bottom: 1px solid #7ba0cf; }
.r-row { display: grid; grid-template-columns: 79px 161px 104px 104px 104px 98px 1fr; height: 20px; border-bottom: 1px dotted #aaa; background: #fff; }
.r-row > span { border-right: 1px dotted #aaa; padding-left: 5px; line-height: 21px; overflow: hidden; position: relative; }
.r-row > span.ctr { padding-left: 0; text-align: center; }
.r-row > span.ctr-l { padding-left: 5px; }
.r-row a { color: #0000c8; text-decoration: underline; margin-left: -2px; }
.r-head { background: #adc7e6; border-bottom: 0; height: 20px; }
.r-head > span { border-right: 1px solid #7ba0cf; text-align: center; padding: 0 10px 0 0; line-height: 20px; }
.r-head > span.clip { padding: 0 0 0 5px; text-align: left; border-right: 0; }
.pin { position: absolute; right: 3px; top: 5px; width: 12px; height: 10px; }
.r-filter { background: #fff3ca; height: 19px; border-bottom: 0; }
.r-filter > span { border-right: 1px dotted #aaa; padding-left: 0; }
.eq { position: absolute; left: 5px; top: 0; width: 12px; height: 19px; line-height: 19px; text-align: left; border-right: 1px dotted #999; font-size: 14px; color: #333366; }
.fsq { position: absolute; left: 4px; top: 3px; width: 12px; height: 12px; }
.fsq2 { position: absolute; right: 4px; top: 3px; width: 12px; height: 12px; }
.edit-cell { background: linear-gradient(90deg, #adc7e6 19px, transparent 19px); }
.edit-box { position: absolute; left: 19px; top: 0; width: 107px; height: 19px; background: #fff; }
.caret { position: absolute; left: 4px; top: 3px; width: 1px; height: 13px; background: #000; }
.edit-arrow { position: absolute; left: 126px; top: 0; width: 17px; height: 19px; background: #dcc88a; }
.edit-arrow::after { content: ""; position: absolute; left: 4px; top: 8px; border: 4px solid transparent; border-top: 4px solid #111; border-bottom: 0; }

.dropdown { position: absolute; left: 207px; top: 355px; width: 292px; height: 113px; background: #fff; border: 1px solid #7a7a7a; display: flex; white-space: nowrap; font-size: 11px; }
.dd-list { list-style: none; margin: 0; padding: 0 0 0 1px; flex: 1; color: #1c1c30; }
.dd-list li { height: 14px; line-height: 14px; }
.dd-scroll { width: 17px; flex: none; display: flex; flex-direction: column; background: #d3d3d3; }
.dd-up { height: 10px; background: #adc7e6; position: relative; }
.dd-up::after { content: ""; position: absolute; left: 5px; top: 5px; border: 3px solid transparent; border-bottom: 4px solid #111; border-top: 0; }
.dd-thumb { height: 34px; background: #adc7e6; }
.dd-track { flex: 1; }
.dd-down { height: 17px; background: #adc7e6; position: relative; }
.dd-down::after { content: ""; position: absolute; left: 4px; top: 6px; border: 4px solid transparent; border-top: 4px solid #111; border-bottom: 0; }

.mark { position: absolute; border: 5px solid #ed1c24; }
.mark-a { left: 265px; top: 58px; width: 324px; height: 193px; }
.mark-b { left: 361px; top: 299px; width: 154px; height: 64px; }
```
